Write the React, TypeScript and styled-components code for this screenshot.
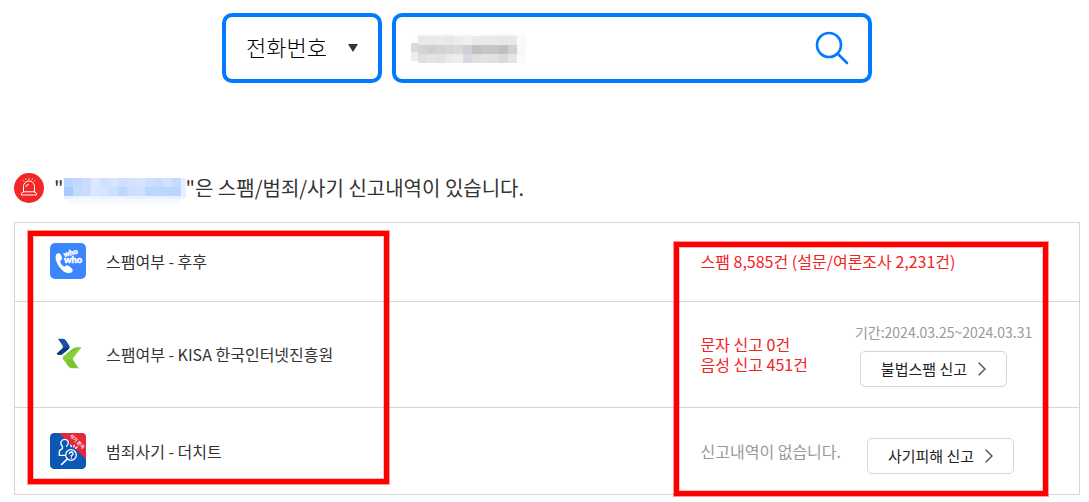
import React from "react";
import styled, { createGlobalStyle } from "styled-components";

const GlobalStyle = createGlobalStyle`
  *, *::before, *::after { box-sizing: border-box; }
  body {
    margin: 0;
    background: #fff;
    color: #333;
    font-family: "Noto Sans CJK KR", "Noto Sans", sans-serif;
    font-size: 16px;
    line-height: 20px;
  }
`;

const Page = styled.main`
  padding: 13px 9px 7px 14px;
`;

const SearchForm = styled.form`
  display: flex;
  justify-content: center;
  gap: 10px;
`;

const Field = styled.div<{ $width: number }>`
  position: relative;
  display: flex;
  align-items: center;
  flex: 0 1 ${(p) => p.$width}px;
  min-width: 0;
  height: 70px;
  border: 4px solid #007bff;
  border-radius: 10px;
  background: #fff;
`;

const TypeSelect = styled.select`
  appearance: none;
  width: 100%;
  height: 100%;
  padding: 0 40px 4px 20px;
  border: 0;
  background: transparent;
  color: #000;
  font: 300 22px/32px "Noto Sans CJK KR", "Noto Sans", sans-serif;
  outline: none;
`;

const Arrow = styled.svg`
  position: absolute;
  right: 20px;
  pointer-events: none;
`;

const SearchInput = styled.input`
  flex: 1;
  min-width: 0;
  height: 100%;
  border: 0;
  background: transparent;
  font: 300 22px/32px "Noto Sans CJK KR", "Noto Sans", sans-serif;
  outline: none;
`;

const SearchButton = styled.button`
  display: flex;
  padding: 0;
  margin-right: 19px;
  border: 0;
  background: transparent;
`;

const MaskedQuery = styled.svg`
  flex: none;
  margin-left: 15px;
`;

const Notice = styled.h1`
  display: flex;
  align-items: center;
  gap: 10px;
  margin: 90px 0 18px;
  font-size: 20px;
  font-weight: 400;
  line-height: 30px;
`;

const MaskedNumber = styled.svg`
  margin: 0 -1px 0 1px;
  vertical-align: middle;
`;

const Results = styled.section`
  position: relative;
`;

const Highlight = styled.div`
  position: absolute;
  border: 5px solid #f00;
  box-shadow: 0 0 0 1px rgba(255, 0, 0, 0.4), inset 0 0 0 1px rgba(255, 0, 0, 0.25);
  pointer-events: none;
`;

const SourceHighlight = styled(Highlight)`
  top: 9px;
  bottom: 11px;
  left: 14px;
  width: 361px;
`;

const ReportHighlight = styled(Highlight)`
  top: 20px;
  right: 32px;
  bottom: -1px;
  width: 374px;
`;

const Table = styled.table`
  width: 100%;
  table-layout: fixed;
  border-collapse: collapse;
  border: 1px solid #d5d5d5;
`;

const Row = styled.tr<{ $height: number }>`
  height: ${(p) => p.$height}px;
  border-bottom: 1px solid #d5d5d5;

  &:first-child > * {
    padding-bottom: 2px;
  }
`;

const SourceCell = styled.th`
  width: 60%;
  padding: 0 0 0 35px;
  font-weight: 400;
  text-align: left;
`;

const Source = styled.div`
  display: flex;
  align-items: center;
  gap: 20px;
`;

const ReportCell = styled.td`
  padding: 0 0 0 47px;
`;

const Report = styled.div<{ $gap?: number }>`
  display: flex;
  align-items: center;
  gap: ${(p) => p.$gap ?? 0}px;
  white-space: nowrap;
`;

const Count = styled.p<{ $muted?: boolean }>`
  margin: 0;
  color: ${(p) => (p.$muted ? "#999" : "#f22323")};
`;

const Actions = styled.div<{ $top?: number }>`
  display: flex;
  flex-direction: column;
  gap: 9px;
  padding-top: ${(p) => p.$top ?? 0}px;
`;

const Period = styled.span`
  color: #999;
  font-size: 14px;
`;

const ReportButton = styled.button<{ $indent?: number }>`
  display: flex;
  align-items: center;
  justify-content: center;
  gap: 11px;
  width: 147px;
  height: 36px;
  margin: 0 0 0 ${(p) => p.$indent ?? 0}px;
  padding: 0;
  border: 1px solid #d5d5d5;
  border-radius: 5px;
  background: #fff;
  color: #222;
  font: 400 15px/20px "Noto Sans CJK KR", "Noto Sans", sans-serif;
`;

type Cell = [x: number, y: number, width: number, height: number, color: string];

const strip = (x: number, y: number, size: number, height: number, colors: string[]): Cell[] =>
  colors.map((color, i) => [x + i * size, y, size, height, color]);

const queryCells: Cell[] = [
  [0, 0, 7, 2, "#fdfdfd"],
  ...strip(7, 0, 9, 2, ["#f7f7f7", "#f7f7f7", "#f6f6f6", "#f4f4f4", "#fcfcfc", "#f7f7f7", "#fcfcfc", "#f6f6f6", "#f5f5f5", "#f5f5f5", "#f6f6f6", "#fefefe"]),
  [0, 2, 7, 7, "#fdfdfd"],
  ...strip(7, 2, 9, 9, ["#e9e9e9", "#e8e9eb", "#ebebec", "#e8e8e9", "#ececed", "#efeff2", "#eaeaea", "#e8e9e9", "#e8e8e9", "#e6e7e7", "#e7e8e8", "#f9fbfa"]),
  [0, 9, 7, 9, "#d9d9d8"],
  ...strip(7, 11, 9, 9, ["#d5d3ce", "#cdced7", "#d3d2d7", "#d8d6d2", "#d9d9d9", "#cdd0db", "#c2c1c2", "#c7c6c6", "#c5c5c8", "#bfbfc4", "#d0d1d1", "#f7f9f8"]),
  [0, 18, 7, 9, "#ececec"],
  ...strip(7, 20, 9, 9, ["#dfdfde", "#e4e4e4", "#e2e2e3", "#e9eae9", "#f0ecea", "#d9d8de", "#dedfe2", "#e2e2e2", "#e1e1e2", "#dadadb", "#e5e5e5", "#fafafa"]),
];

const numberCells: Cell[] = [
  ...strip(0, 0, 9, 9, ["#bbd4ff", "#c0d7ff", "#cadbff", "#dce8ff", "#cee1ff", "#d5e4ff", "#cde0ff", "#d3e3ff", "#d5e4ff", "#cddfff", "#c8dcff", "#d1e2ff", "#c5daff"]),
  ...strip(0, 9, 9, 9, ["#a5caff", "#c3dbff", "#c9dbff", "#d8e6ff", "#d4e5ff", "#cae0ff", "#bdd8ff", "#cbdfff", "#cfe1ff", "#bdd6ff", "#bad5ff", "#bdd6ff", "#bdd6ff"]),
  [117, 0, 5, 9, "#e8f0ff"],
  [117, 9, 5, 11, "#e7f0ff"],
  ...strip(0, 18, 9, 3, ["#e6efff", "#edf3ff", "#f1f5ff", "#edf3ff", "#e9f1ff", "#eef4ff", "#edf4ff", "#e8f1ff", "#e9f1ff", "#ebf2ff", "#ecf3ff", "#eaf2ff", "#e8f0ff"]),
  [3, 21, 114, 5, "#f7faff"],
];

const Cells = ({ cells }: { cells: Cell[] }) => (
  <g shapeRendering="crispEdges">
    {cells.map(([x, y, width, height, fill], i) => (
      <rect key={i} x={x} y={y} width={width} height={height} fill={fill} />
    ))}
  </g>
);

const SirenIcon = () => (
  <svg width="30" height="30" viewBox="0 0 30 30" aria-hidden="true">
    <circle cx="15" cy="15" r="15" fill="#f32626" />
    <g fill="none" stroke="#fff" strokeWidth="1" strokeLinecap="round" strokeLinejoin="round">
      <path d="M9.5 19V13.5a5.5 5.5 0 0 1 11 0V19M9.3 19 7.5 20.3V22h15v-1.7L20.7 19ZM12 13.8q.3-2.3 2.5-2.6" />
      <path d="M15 5.3v1.2M11.5 5.6l.6 1.2M18.5 5.6l-.6 1.2M8.9 7.4l.9.9M21.1 7.4l-.9.9" strokeWidth=".7" />
    </g>
  </svg>
);

const WhoWhoIcon = () => (
  <svg width="36" height="36" viewBox="0 0 108 108" aria-hidden="true">
    <rect width="108" height="108" rx="15" fill="#3b86ff" />
    <path
      d="M19 34q6-6 12-1q5 6 5 14q0 4-6 7q1 8 9 15q5 3 8-1q4-3 10 1q9 6 11 11q1 6-5 9q-9 4-21-3Q25 74 18 52q-3-12 1-18Z"
      fill="#fff"
    />
    <g fill="#fff" stroke="#fff" strokeWidth="1.4" fontFamily="Lato, sans-serif" fontWeight="900">
      <text x="43" y="42" fontSize="22" transform="rotate(-14 43 42)">who</text>
      <text x="42" y="61" fontSize="28">who</text>
    </g>
  </svg>
);

const KisaIcon = () => (
  <svg width="36" height="36" viewBox="30 36 108 108" aria-hidden="true">
    <path d="M54 44h14q7 0 11 7l9 14q3 5-2 9Q76 85 64 92q-7 2-14-3l17-16q3-4 1-8Z" fill="#17539b" />
    <path d="m50 89 18-15 20-6q1 4-3 8L64 92q-8 2-14-3Z" fill="#083b7b" />
    <path d="M124 70h-13q-8 0-15 6L71 97q-5 4-1 9l15 21q4 6 10 6h23q-4-2-7-7l-12-19q-3-4 1-9Z" fill="#79c52d" />
    <path d="M124 70 71 97q-5 4-1 9l4 5 25-8Z" fill="#8ace38" />
  </svg>
);

const TheCheatIcon = () => (
  <svg width="36" height="36" viewBox="0 0 108 108" aria-hidden="true">
    <defs>
      <clipPath id="cheat-tile"><rect width="108" height="108" rx="13" /></clipPath>
    </defs>
    <g clipPath="url(#cheat-tile)">
      <rect width="108" height="108" fill="#0b58b5" />
      <path d="M27 0h81v79Z" fill="#e5293d" />
    </g>
    <text x="78" y="29" fill="#fff" fontSize="14" fontWeight="700" textAnchor="middle" transform="rotate(44 78 29)">사기 분석</text>
    <g fill="none" stroke="#fff" strokeWidth="4" strokeLinecap="round">
      <path d="M37 40q-6-5-4-14q3-7 11-7t11 7q1 9-5 14M37 40q2 7-3 9q-6 1-6 9v9h18M64 41l-2-5M71 42l2-5M77 46l4-4" />
      <circle cx="63" cy="66" r="16" />
      <path d="M52 78 35 94" strokeWidth="5" />
      <path d="M58 62q1-5 6-5q6 1 5 6q-1 3-5 5v2M64 75v.5" />
    </g>
  </svg>
);

const Chevron = () => (
  <svg width="8" height="14" viewBox="0 0 8 14" fill="none" stroke="#555" strokeWidth="1.5" aria-hidden="true">
    <path d="m.7.7 6.3 6.3-6.3 6.3" />
  </svg>
);

export default function App() {
  return (
    <>
      <GlobalStyle />
      <Page>
        <SearchForm onSubmit={(e) => e.preventDefault()}>
          <Field $width={160}>
            <TypeSelect aria-label="검색 유형">
              <option>전화번호</option>
            </TypeSelect>
            <Arrow width="10" height="8" viewBox="0 0 10 8" aria-hidden="true">
              <path d="M0 0h10L5 8Z" fill="#333" />
            </Arrow>
          </Field>
          <Field $width={480}>
            <MaskedQuery width="115" height="29" viewBox="0 0 115 29" aria-hidden="true">
              <Cells cells={queryCells} />
            </MaskedQuery>
            <SearchInput type="text" aria-label="전화번호" />
            <SearchButton type="submit" aria-label="검색">
              <svg width="34" height="34" viewBox="0 0 34 34" fill="none" stroke="#007bff" strokeWidth="2.6" strokeLinecap="round">
                <circle cx="14" cy="14" r="12" />
                <path d="m23 23 9 9" />
              </svg>
            </SearchButton>
          </Field>
        </SearchForm>

        <Notice>
          <SirenIcon />
          <span>
            "
            <MaskedNumber width="122" height="26" viewBox="0 0 122 26" aria-hidden="true">
              <Cells cells={numberCells} />
            </MaskedNumber>
            "은 스팸/범죄/사기 신고내역이 있습니다.
          </span>
        </Notice>

        <Results>
          <Table>
            <tbody>
              <Row $height={79}>
                <SourceCell scope="row">
                  <Source><WhoWhoIcon />스팸여부 - 후후</Source>
                </SourceCell>
                <ReportCell>
                  <Count>스팸 8,585건 (설문/여론조사 2,231건)</Count>
                </ReportCell>
              </Row>
              <Row $height={106}>
                <SourceCell scope="row">
                  <Source><KisaIcon />스팸여부 - KISA 한국인터넷진흥원</Source>
                </SourceCell>
                <ReportCell>
                  <Report $gap={47}>
                    <div>
                      <Count>문자 신고 0건</Count>
                      <Count>음성 신고 451건</Count>
                    </div>
                    <Actions>
                      <Period>기간:2024.03.25~2024.03.31</Period>
                      <ReportButton type="button" $indent={5}>불법스팸 신고<Chevron /></ReportButton>
                    </Actions>
                  </Report>
                </ReportCell>
              </Row>
              <Row $height={87}>
                <SourceCell scope="row">
                  <Source><TheCheatIcon />범죄사기 - 더치트</Source>
                </SourceCell>
                <ReportCell>
                  <Report $gap={26}>
                    <Count $muted>신고내역이 없습니다.</Count>
                    <Actions $top={10}>
                      <ReportButton type="button">사기피해 신고<Chevron /></ReportButton>
                    </Actions>
                  </Report>
                </ReportCell>
              </Row>
            </tbody>
          </Table>
          <SourceHighlight />
          <ReportHighlight />
        </Results>
      </Page>
    </>
  );
}
